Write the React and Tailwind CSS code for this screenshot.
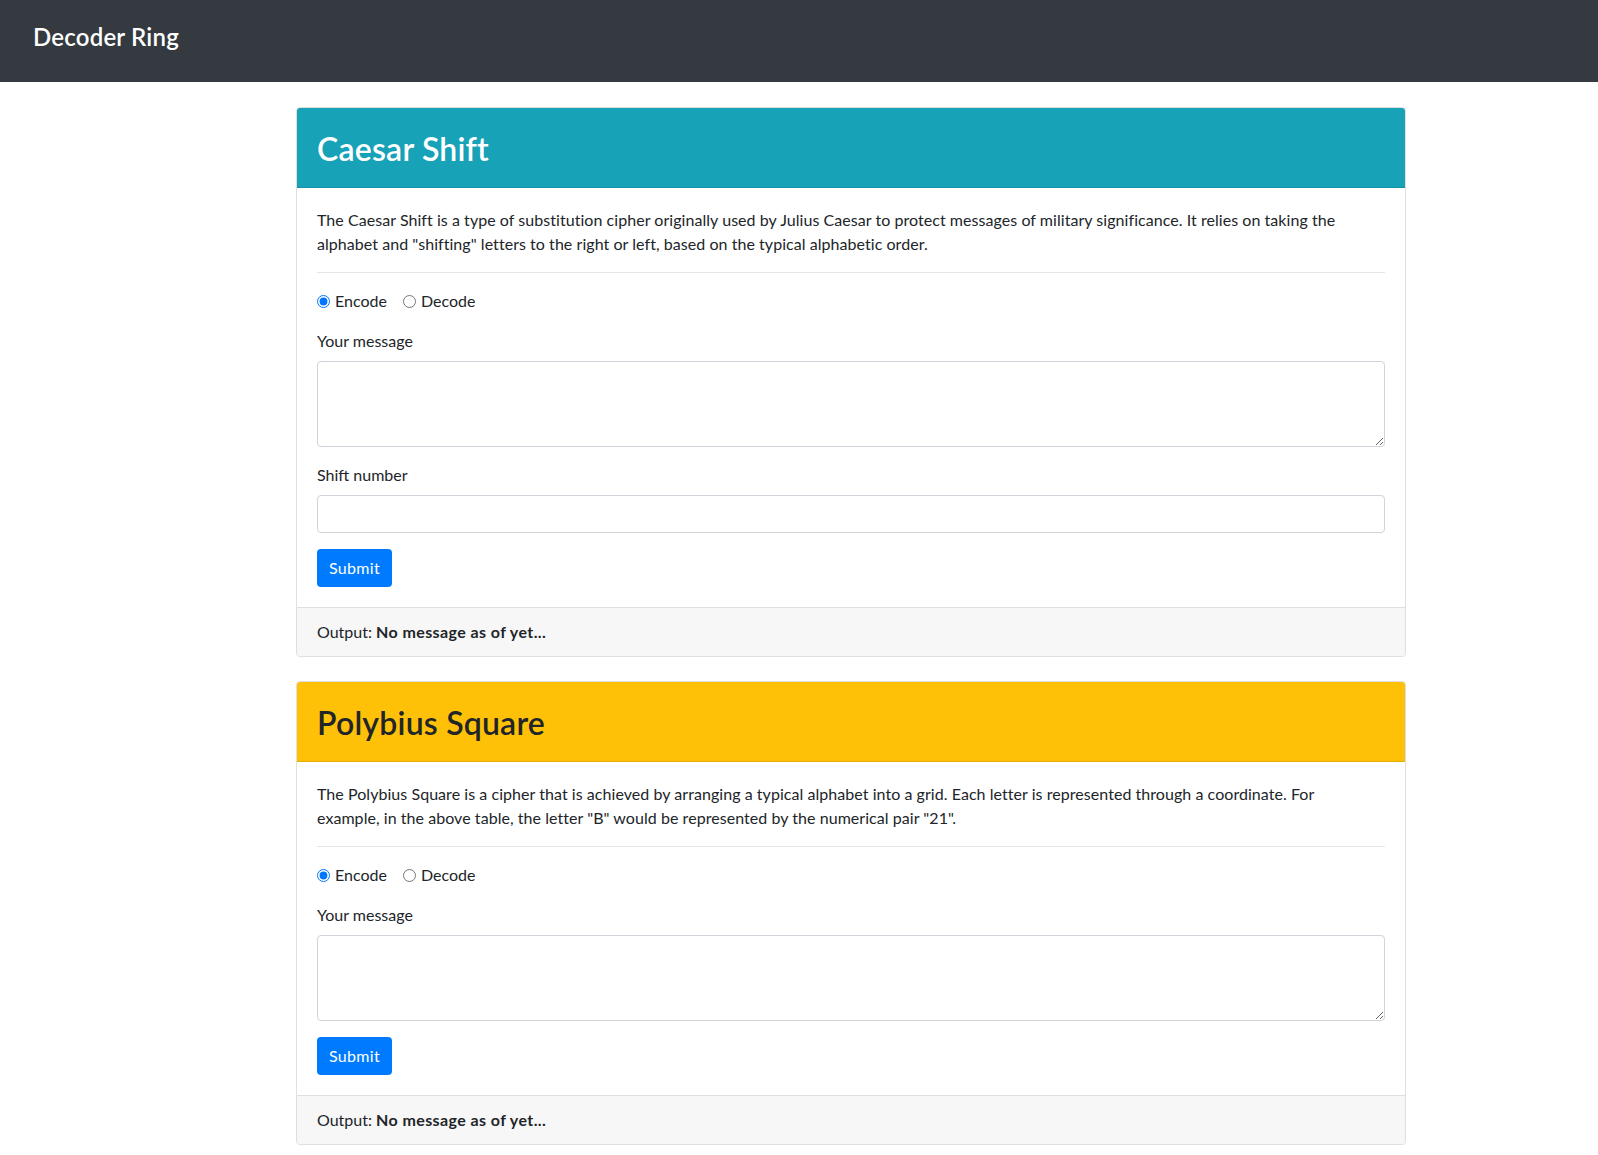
import React from "react";

const font = { fontFamily: "Lato, 'Noto Sans', sans-serif" };

function CipherCard({ title, headerClass, titleClass, description, showShift }) {
  return (
    <div className="w-[1110px] mb-6 border border-[#dfdfdf] rounded overflow-hidden bg-white">
      <div className={`h-[80px] flex items-center pt-1 px-5 border-b border-black/10 ${headerClass}`}>
        <h2 className={`text-[32px] font-semibold leading-[1.2] tracking-[0.2px] ${titleClass}`}>{title}</h2>
      </div>

      <div className="p-5">
        <p className="text-base leading-6 text-[#212529] tracking-[0.05px]">{description}</p>
        <hr className="my-4 border-0 border-t border-black/10" />

        {/* radios */}
        <div className="flex items-center h-6 mb-4 text-[#212529]">
          <label className="flex items-center mr-4">
            <input type="radio" name={title} defaultChecked className="w-[13px] h-[13px] m-0 mr-[5px]" />
            Encode
          </label>
          <label className="flex items-center">
            <input type="radio" name={title} className="w-[13px] h-[13px] m-0 mr-[5px]" />
            Decode
          </label>
        </div>

        <label className="block leading-6 mb-2 text-[#212529]">Your message</label>
        <textarea
          rows={3}
          className="block w-full h-[86px] mb-4 px-3 py-1.5 border border-[#ced4da] rounded leading-6"
        />

        {showShift && (
          <>
            <label className="block leading-6 mb-2 text-[#212529]">Shift number</label>
            <input type="number" className="block w-full h-[38px] mb-4 px-3 border border-[#ced4da] rounded" />
          </>
        )}

        <button className="h-[38px] px-3 bg-[#007bff] text-white rounded text-base tracking-[0.3px]">Submit</button>
      </div>

      <div className="px-5 py-3 leading-6 bg-[#f7f7f7] border-t border-[#dfdfdf] text-[#212529]">
        Output: <strong className="font-bold tracking-[0.4px]">No message as of yet...</strong>
      </div>
    </div>
  );
}

export default function App() {
  return (
    <div className="min-h-screen bg-white text-base" style={font}>
      <nav className="h-[82px] flex items-center pb-2 px-[33px] bg-[#343a40]">
        <span className="text-white text-[24px] font-semibold tracking-[0.2px]">Decoder Ring</span>
      </nav>

      <main className="ml-[296px] pt-[25px] pb-3">
        <CipherCard
          title="Caesar Shift"
          headerClass="bg-[#17a2b8]"
          titleClass="text-white"
          showShift
          description={
            <>
              The Caesar Shift is a type of substitution cipher originally used by Julius Caesar to protect messages of military significance. It relies on taking the
              <br />
              alphabet and "shifting" letters to the right or left, based on the typical alphabetic order.
            </>
          }
        />
        <CipherCard
          title="Polybius Square"
          headerClass="bg-[#ffc107]"
          titleClass="text-[#212529]"
          description={
            <>
              The Polybius Square is a cipher that is achieved by arranging a typical alphabet into a grid. Each letter is represented through a coordinate. For
              <br />
              example, in the above table, the letter "B" would be represented by the numerical pair "21".
            </>
          }
        />
      </main>
    </div>
  );
}
